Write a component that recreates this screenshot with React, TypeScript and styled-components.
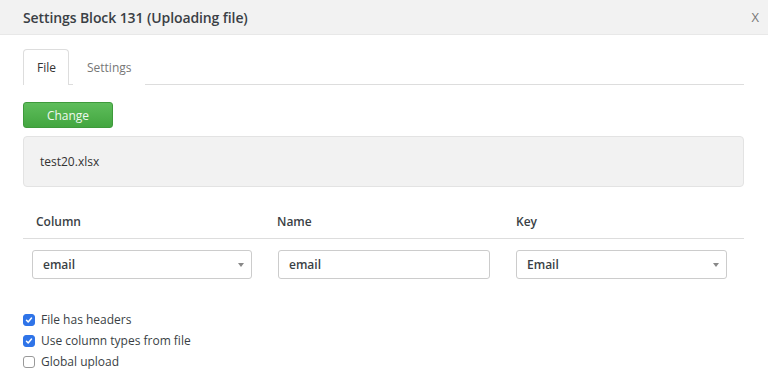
import React, { useState } from 'react';
import styled, { createGlobalStyle } from 'styled-components';

const GlobalStyle = createGlobalStyle`
  body {
    margin: 0;
    background: #fff;
    font-family: 'Open Sans', 'Noto Sans', sans-serif;
    color: #333;
  }
`;

export default function App() {
  const [activeTab, setActiveTab] = useState('file');
  const [options, setOptions] = useState({
    headers: true,
    types: true,
    global: false,
  });

  const toggle = (key: keyof typeof options) =>
    setOptions((prev) => ({ ...prev, [key]: !prev[key] }));

  return (
    <>
      <GlobalStyle />
      <Header>
        <Title>Settings Block 131 (Uploading file)</Title>
        <Close>X</Close>
      </Header>
      <Content>
        <Tabs>
          <Tab active={activeTab === 'file'} onClick={() => setActiveTab('file')}>
            File
          </Tab>
          <Tab active={activeTab === 'settings'} onClick={() => setActiveTab('settings')}>
            Settings
          </Tab>
        </Tabs>
        <ChangeButton type="button">Change</ChangeButton>
        <FileBox>test20.xlsx</FileBox>

        <HeadRow>
          <HeadCell>Column</HeadCell>
          <HeadCell>Name</HeadCell>
          <HeadCell>Key</HeadCell>
        </HeadRow>
        <BodyRow>
          <Select width={220}>
            email
            <Caret />
          </Select>
          <TextInput width={212} defaultValue="email" />
          <Select width={211}>
            Email
            <Caret />
          </Select>
        </BodyRow>

        <Options>
          <Option onClick={() => toggle('headers')}>
            <Box checked={options.headers}>{options.headers && <Tick />}</Box>
            File has headers
          </Option>
          <Option onClick={() => toggle('types')}>
            <Box checked={options.types}>{options.types && <Tick />}</Box>
            Use column types from file
          </Option>
          <Option onClick={() => toggle('global')}>
            <Box checked={options.global}>{options.global && <Tick />}</Box>
            Global upload
          </Option>
        </Options>
      </Content>
    </>
  );
}

const Tick = () => (
  <svg width="8" height="8" viewBox="0 0 8 8">
    <path d="M1.5 4.2 L3.2 5.9 L6.5 2" fill="none" stroke="#fff" strokeWidth="1.5" strokeLinecap="round" strokeLinejoin="round" />
  </svg>
);

const Caret = () => (
  <CaretIcon width="6" height="4" viewBox="0 0 6 4">
    <path d="M0 0 L6 0 L3 4 Z" fill="#888" />
  </CaretIcon>
);

const Header = styled.div`
  height: 34px;
  display: flex;
  align-items: center;
  justify-content: space-between;
  padding: 0 9px 0 23px;
  background: #f2f2f2;
  border-bottom: 1px solid #e8e8e8;
`;

const Title = styled.div`
  font-size: 14px;
  font-weight: 600;
  letter-spacing: -0.1px;
  color: #3a3f45;
`;

const Close = styled.div`
  font-size: 13px;
  color: #777;
  cursor: pointer;
  margin-top: -1px;
`;

const Content = styled.div`
  padding: 14px 24px 0 23px;
`;

const Tabs = styled.div`
  display: flex;
  gap: 4px;
  height: 35px;
  border-bottom: 1px solid #ddd;
`;

const Tab = styled.div<{ active?: boolean }>`
  display: flex;
  align-items: center;
  padding: 0 12px 0 13px;
  font-size: 12px;
  cursor: pointer;
  color: ${(p) => (p.active ? '#333' : '#777')};
  background: #fff;
  border: 1px solid ${(p) => (p.active ? '#ddd' : 'transparent')};
  border-bottom: none;
  border-radius: 4px 4px 0 0;
  margin-bottom: -1px;
  height: 36px;
  box-sizing: border-box;
`;

const ChangeButton = styled.button`
  display: block;
  margin-top: 17px;
  width: 90px;
  height: 26px;
  border: 1px solid #3e9a3b;
  border-radius: 3px;
  background: linear-gradient(#5ebd5b, #43a640);
  color: #eef8ee;
  font-family: 'Open Sans', sans-serif;
  font-size: 12px;
  padding: 0;
  cursor: pointer;
`;

const FileBox = styled.div`
  margin-top: 8px;
  height: 51px;
  box-sizing: border-box;
  display: flex;
  align-items: center;
  padding: 0 16px;
  background: #f2f2f2;
  border: 1px solid #e3e3e3;
  border-radius: 4px;
  font-size: 12px;
  color: #333;
`;

const HeadRow = styled.div`
  margin-top: 20px;
  display: grid;
  grid-template-columns: 241px 239px 1fr;
  border-bottom: 1px solid #ddd;
`;

const HeadCell = styled.div`
  padding: 6px 13px 7px;
  line-height: 18px;
  font-size: 12px;
  font-weight: 600;
  color: #3a3f45;
`;

const BodyRow = styled.div`
  display: flex;
  gap: 26px;
  padding: 11px 0 0 9px;
`;

const Select = styled.div<{ width: number }>`
  position: relative;
  width: ${(p) => p.width}px;
  height: 29px;
  box-sizing: border-box;
  display: flex;
  align-items: center;
  padding: 0 10px;
  border: 1px solid #ccc;
  border-radius: 3px;
  font-size: 12px;
  font-weight: 600;
  color: #3a3f45;
  background: #fff;
`;

const CaretIcon = styled.svg`
  position: absolute;
  right: 7px;
  top: 12px;
`;

const TextInput = styled.input<{ width: number }>`
  width: ${(p) => p.width}px;
  height: 29px;
  box-sizing: border-box;
  padding: 0 10px;
  border: 1px solid #ccc;
  border-radius: 3px;
  font-family: 'Open Sans', sans-serif;
  font-size: 12px;
  font-weight: 600;
  color: #3a3f45;
  outline: none;
`;

const Options = styled.div`
  margin-top: 30px;
  display: flex;
  flex-direction: column;
`;

const Option = styled.label`
  display: flex;
  align-items: center;
  gap: 6px;
  height: 21px;
  font-size: 12px;
  color: #3a3f45;
  cursor: pointer;
`;

const Box = styled.span<{ checked?: boolean }>`
  width: 12px;
  height: 12px;
  box-sizing: border-box;
  border-radius: 3px;
  display: flex;
  align-items: center;
  justify-content: center;
  background: ${(p) => (p.checked ? '#2f74e8' : '#fff')};
  border: 1px solid ${(p) => (p.checked ? '#2f74e8' : '#999')};
`;
